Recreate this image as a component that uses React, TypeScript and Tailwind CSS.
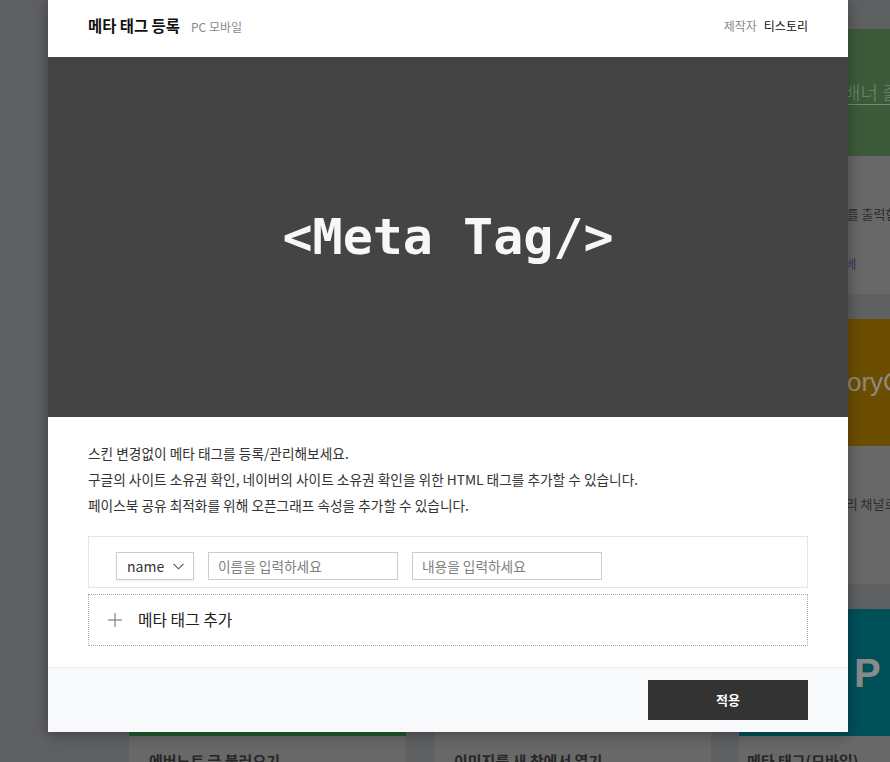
const cols = [
  [
    { thumb: 'bg-[#3f4a5a]', label: '', title: '', desc: '', link: '', pad: 'pl-5' },
    { thumb: 'bg-[#4a4f57]', label: '', title: '', desc: '', link: '', pad: 'pl-5' },
    { thumb: 'bg-[#1e5a30]', label: '', title: '에버노트 글 불러오기', desc: '', link: '', pad: 'pl-5' },
  ],
  [
    { thumb: 'bg-[#4b5563]', label: '', title: '', desc: '', link: '', pad: 'pl-5' },
    { thumb: 'bg-[#505a50]', label: '', title: '', desc: '', link: '', pad: 'pl-5' },
    { thumb: 'bg-[#686868]', label: '', title: '이미지를 새 창에서 열기', desc: '', link: '', pad: 'pl-5' },
  ],
  [
    { thumb: 'bg-[#3d5b3b]', label: 'banner', title: '', desc: '상단에 이미지를 출력함', link: '배너 설정 가이드 베', pad: 'pl-[33px]' },
    { thumb: 'bg-[#6b4e00]', label: 'tistory', title: '', desc: '블로그를 티스토리 채널로 연결합니다.', link: '', pad: 'pl-5' },
    { thumb: 'bg-[#00505a]', label: 'app', title: '메타 태그(모바일)', desc: '', link: '', pad: 'pl-2' },
  ],
];

const Thumb = ({ label, thumb }: { label: string; thumb: string }) => {
  if (label === 'banner') {
    return (
      <div className={`h-[127px] ${thumb} flex items-center pl-[104px]`}>
        <span className="text-[19px] text-[#6f8c6d] underline underline-offset-4 whitespace-nowrap font-['Noto_Sans_CJK_KR',sans-serif] font-light">
          배너 출력하기
        </span>
      </div>
    );
  }
  if (label === 'tistory') {
    return (
      <div className={`h-[127px] ${thumb} flex items-center pl-[67px]`}>
        <span className="text-[26px] text-[#8d8a80] whitespace-nowrap font-['Liberation_Sans',sans-serif]">
          TistoryCh
        </span>
      </div>
    );
  }
  if (label === 'app') {
    return (
      <div className={`h-[127px] ${thumb} flex items-center pl-[115px]`}>
        <span className="text-[40px] font-bold text-[#8a8a8a] whitespace-nowrap font-['Liberation_Sans',sans-serif]">
          P
        </span>
      </div>
    );
  }
  return <div className={`h-[127px] ${thumb}`} />;
};

const Background = () => (
  <div className="flex gap-[28px] pl-[129px] pt-[29px]">
    {cols.map((col, i) => (
      <div key={i} className="w-[277px] shrink-0 flex flex-col">
        {col.map((card, j) => (
          <div key={j} className="flex flex-col mb-[25px]">
            <Thumb label={card.label} thumb={card.thumb} />
            <div className={`h-[138px] bg-[#686868] ${card.pad} pr-5 pt-[14px] font-['Noto_Sans_CJK_KR',sans-serif]`}>
              <div className="h-[22px] text-[15px] font-bold text-[#262626] whitespace-nowrap">
                {card.title}
              </div>
              <div className="mt-[12px] h-[20px] text-[13px] text-[#2e2e2e] whitespace-nowrap">
                {card.desc}
              </div>
              <div className="mt-[31px] -ml-[12px] text-[12px] text-[#2f3a60] whitespace-nowrap">
                {card.link}
              </div>
            </div>
          </div>
        ))}
      </div>
    ))}
  </div>
);

const Modal = () => (
  <div className="absolute left-[48px] top-0 w-[800px] bg-white shadow-[0_2px_14px_rgba(0,0,0,0.35)] font-['Noto_Sans_CJK_KR',sans-serif]">
    <div className="h-[57px] px-10 flex items-center justify-between pb-[5px]">
      <div className="flex items-baseline gap-[11px]">
        <h1 className="text-[15.4px] font-bold text-[#111]">메타 태그 등록</h1>
        <span className="text-[12px] text-[#8a8a8a]">PC 모바일</span>
      </div>
      <div className="flex items-baseline gap-[7px] text-[12px]">
        <span className="text-[#888]">제작자</span>
        <span className="text-[#111]">티스토리</span>
      </div>
    </div>

    <div className="h-[360px] bg-[#444444] flex items-center justify-center">
      <span className="text-[50px] font-bold text-[#f7f7f7] font-['DejaVu_Sans_Mono',monospace]">
        {'<Meta Tag/>'}
      </span>
    </div>

    <div className="px-10 pt-[23px] pb-[21px]">
      <div className="text-[13.7px] leading-[26px] text-[#333]">
        <p>스킨 변경없이 메타 태그를 등록/관리해보세요.</p>
        <p>구글의 사이트 소유권 확인, 네이버의 사이트 소유권 확인을 위한 HTML 태그를 추가할 수 있습니다.</p>
        <p>페이스북 공유 최적화를 위해 오픈그래프 속성을 추가할 수 있습니다.</p>
      </div>

      <div className="mt-[18px] h-[52px] border border-[#e2e5ea] flex items-start gap-[14px] pl-[27px] pt-[15px]">
        <div className="w-[78px] h-[28px] border border-[#c9ced6] shadow-[0_1px_2px_rgba(0,0,0,0.08)] flex items-center justify-between pl-[10px] pr-[9px]">
          <span className="text-[14px] text-[#333]">name</span>
          <svg width="11" height="7" viewBox="0 0 11 7" fill="none">
            <polyline points="0.5,0.8 5.5,5.8 10.5,0.8" stroke="#555" strokeWidth="1.1" />
          </svg>
        </div>
        <input
          className="w-[190px] h-[28px] border border-[#c9ced6] pl-[9px] text-[13.7px] outline-none placeholder:text-[#808080]"
          placeholder="이름을 입력하세요"
        />
        <input
          className="w-[190px] h-[28px] border border-[#c9ced6] pl-[9px] text-[13.7px] outline-none placeholder:text-[#808080]"
          placeholder="내용을 입력하세요"
        />
      </div>

      <div className="mt-[6px] h-[52px] border border-dotted border-[#a8a8a8] flex items-center pl-[19px] gap-[16px]">
        <svg width="14" height="14" viewBox="0 0 14 14" fill="none">
          <line x1="7" y1="0" x2="7" y2="14" stroke="#7a7f87" strokeWidth="1.2" />
          <line x1="0" y1="7" x2="14" y2="7" stroke="#7a7f87" strokeWidth="1.2" />
        </svg>
        <span className="text-[15.8px] text-[#222]">메타 태그 추가</span>
      </div>
    </div>

    <div className="h-[65px] bg-[#f8f9fb] border-t border-[#eceef1] flex items-center justify-end px-10">
      <button className="w-[160px] h-[40px] bg-[#333] text-white text-[13px] font-bold">적용</button>
    </div>
  </div>
);

const App = () => {
  return (
    <div className="relative w-[890px] h-[762px] overflow-hidden bg-[#5f6062]">
      <Background />
      <Modal />
    </div>
  );
};

export default App;
